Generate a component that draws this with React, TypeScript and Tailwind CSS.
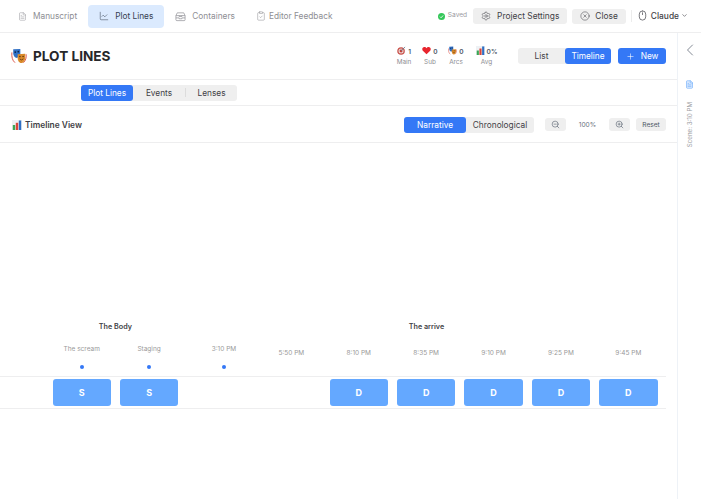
import { FileText, ChartLine, Settings, CircleX, ChevronDown, ChevronLeft, Plus, ZoomIn, ZoomOut, Mouse, ClipboardCheck } from "lucide-react";

const Masks = ({ s = 18 }: { s?: number }) => (
  <svg width={s} height={s} viewBox="0 0 18 18">
    <path d="M1 5 C0.5 10 1.5 14 4.5 16.5" stroke="#d9453a" strokeWidth="1" fill="none" />
    <path d="M17 7 C17.5 11 16.5 14 14 16.5" stroke="#d9453a" strokeWidth="1" fill="none" />
    <path d="M2.5 1.5 L10.5 1 L10.5 8 C10 10.5 7 11.5 5.5 11 C3.5 10.2 2.5 8 2.5 6z" fill="#2f6fc4" />
    <circle cx="4.8" cy="4.6" r="1" fill="#10264d" />
    <circle cx="8.2" cy="4.2" r="1" fill="#10264d" />
    <path d="M7.5 7 L16 6.5 L16 11 C16 14.5 13.4 17 11.5 17 C9 17 7.5 14 7.5 11z" fill="#d98a2b" />
    <circle cx="10" cy="9.7" r="0.9" fill="#5a3210" />
    <circle cx="13.6" cy="9.5" r="0.9" fill="#5a3210" />
    <path d="M9.8 12.3 Q11.8 14.6 14 12.2" stroke="#5a3210" strokeWidth="0.9" fill="none" />
  </svg>
);

const Bars = ({ s = 10 }: { s?: number }) => (
  <svg width={s} height={s} viewBox="0 0 10 10">
    <rect x="0" y="0" width="10" height="10" fill="#eef1f4" />
    <rect x="0.8" y="5" width="2.4" height="5" fill="#3aa655" />
    <rect x="3.8" y="2.8" width="2.4" height="7.2" fill="#d9453a" />
    <rect x="6.8" y="0.5" width="2.4" height="9.5" fill="#2f6fc4" />
  </svg>
);

const Target = () => (
  <svg width="9" height="9" viewBox="0 0 10 10">
    <circle cx="4.5" cy="5.5" r="4.2" fill="#c9504a" />
    <circle cx="4.5" cy="5.5" r="2.8" fill="#ead9d6" />
    <circle cx="4.5" cy="5.5" r="1.6" fill="#c9403a" />
    <path d="M4.5 5.5 L9 1" stroke="#5b7f95" strokeWidth="0.9" />
  </svg>
);

const Heart = () => (
  <svg width="9" height="9" viewBox="0 0 10 10">
    <path d="M5 9.3 L0.9 5.2 C-0.3 3.8 0.3 1.3 2.6 1.2 C3.7 1.2 4.5 1.8 5 2.6 C5.5 1.8 6.3 1.2 7.4 1.2 C9.7 1.3 10.3 3.8 9.1 5.2z" fill="#e8252e" />
  </svg>
);

const Box = () => (
  <svg width="11" height="11" viewBox="0 0 24 24" fill="none" stroke="currentColor" strokeWidth="1.5" strokeLinejoin="round">
    <path d="M5 4h14l3 6v9a2 2 0 0 1-2 2H4a2 2 0 0 1-2-2v-9z" />
    <path d="M2 10h20" />
    <path d="M2 15h7v2h6v-2h7" />
    <path d="M9 10v2h6v-2" />
  </svg>
);

function CircleCheck() {
  return (
    <svg width="7" height="7" viewBox="0 0 10 10" className="mr-[3px]">
      <circle cx="5" cy="5" r="5" fill="#34c759" />
      <path d="M2.8 5.2 L4.4 6.8 L7.3 3.5" stroke="#fff" strokeWidth="1.2" fill="none" />
    </svg>
  );
}

const Tab = ({ icon, label, active = false, extra = "gap-[6px]" }: { icon: React.ReactNode; label: string; active?: boolean; extra?: string }) => (
  <div className={`flex items-center h-[23px] rounded-[4px] text-[8.3px] ${extra} ${active ? "bg-[#dbeafe] text-[#374151]" : "text-[#8e8e93]"}`}>
    {icon}
    <span>{label}</span>
  </div>
);

const Stat = ({ icon, value, label, extra = "w-[26px]" }: { icon: React.ReactNode; value: string; label: string; extra?: string }) => (
  <div className={`flex flex-col items-center gap-[3px] ${extra}`}>
    <div className="flex items-center gap-[2px] h-[10px] text-[6.5px] font-semibold text-[#4b5563]">
      {icon}
      <span className="pt-[4px] leading-[10px]">{value}</span>
    </div>
    <div className="text-[6.4px] leading-[9px] text-[#8e8e93]">{label}</div>
  </div>
);

const SceneLabel = ({ label, dot = false }: { label: string; dot?: boolean }) => (
  <div className={`w-[67.4px] shrink-0 flex flex-col items-center text-[6.5px] leading-[10px] text-[#999999] ${dot ? "pt-[1px]" : "pt-[5px]"}`}>
    <span>{label}</span>
    {dot && <span className="mt-[11px] w-[4px] h-[4px] rounded-full bg-[#3478f6]" />}
  </div>
);

const Card = ({ letter }: { letter?: string }) => (
  <div className="w-[67.4px] shrink-0 flex justify-center">
    {letter && (
      <div className="w-[58.4px] h-[27px] rounded-[3px] bg-[#64a8ff] flex items-center justify-center text-[9px] font-bold text-white">
        {letter}
      </div>
    )}
  </div>
);

export default function App() {
  return (
    <div className="w-[701px] h-[499px] flex flex-col bg-white overflow-hidden font-['Inter',sans-serif]">
      <header className="h-[33px] shrink-0 border-b border-[#eeeeef] flex items-center pl-[18px] pr-[13px]">
        <div className="flex items-center">
          <Tab extra="gap-[6px] pr-[11px]" icon={<FileText size={9} strokeWidth={1.25} />} label="Manuscript" />
          <Tab extra="gap-[6px] px-[11px]" active icon={<ChartLine size={10} strokeWidth={1.25} />} label="Plot Lines" />
          <Tab extra="gap-[6px] px-[11px]" icon={<Box />} label="Containers" />
          <Tab extra="pl-[10px] gap-[3px]" icon={<ClipboardCheck size={10} strokeWidth={1.25} />} label="Editor Feedback" />
        </div>
        <div className="ml-auto flex items-center">
          <CircleCheck />
          <span className="text-[6.6px] text-[#9a9aa0] mr-[6px]">Saved</span>
          <div className="flex items-center gap-[6px] h-[16px] px-[8px] rounded-[3px] bg-[#efefef] text-[8.4px] text-[#3f3f46]">
            <Settings size={10} strokeWidth={1.25} />
            <span>Project Settings</span>
          </div>
          <div className="ml-[5px] flex items-center gap-[5px] h-[15px] px-[8px] rounded-[3px] bg-[#efefef] text-[8.4px] text-[#3f3f46]">
            <CircleX size={10} strokeWidth={1.25} />
            <span>Close</span>
          </div>
          <div className="ml-[5px] w-px h-[12px] bg-[#ececec]" />
          <div className="ml-[5px] flex items-center text-[8.4px] font-medium text-[#3f3f46]">
            <Mouse size={11} strokeWidth={1.5} className="mr-[3px]" />
            <span className="mr-[2px]">Claude</span>
            <ChevronDown size={7} strokeWidth={2} />
          </div>
        </div>
      </header>

      <div className="flex-1 flex min-h-0">
        <main className="w-[677px] shrink-0 flex flex-col">
          <div className="h-[47px] shrink-0 border-b border-[#eeeeef] flex items-center pl-[11px] pr-[11px]">
            <Masks s={16} />
            <h1 className="ml-[6px] text-[13.6px] font-bold text-[#27272a] pt-[1px]">PLOT LINES</h1>
            <div className="ml-auto flex items-start mr-[21px]">
              <Stat icon={<Target />} value="1" label="Main" />
              <Stat icon={<Heart />} value="0" label="Sub" />
              <Stat icon={<Masks s={9} />} value="0" label="Arcs" />
              <Stat extra="w-[21px] ml-[7px]" icon={<Bars s={9} />} value="0%" label="Avg" />
            </div>
            <div className="flex items-center h-[16px] rounded-[3px] bg-[#efefef] text-[8.3px]">
              <div className="w-[47px] text-center text-[#3f3f46]">List</div>
              <div className="w-[46px] h-full rounded-[3px] bg-[#3478f6] text-white flex items-center justify-center">Timeline</div>
            </div>
            <div className="ml-[7px] flex items-center justify-center gap-[6px] w-[48px] h-[16px] rounded-[3px] bg-[#3478f6] text-[8.3px] text-white">
              <Plus size={9} strokeWidth={1.5} />
              <span>New</span>
            </div>
          </div>

          <div className="h-[26px] shrink-0 border-b border-[#eeeeef] flex items-center pl-[81px]">
            <div className="flex items-center h-[16px] rounded-[3px] bg-[#efefef] text-[8.3px] text-[#3f3f46]">
              <div className="w-[52px] h-full pt-[2px] rounded-[3px] bg-[#3478f6] text-white flex items-center justify-center">Plot Lines</div>
              <div className="w-[52px] pt-[2px] text-center">Events</div>
              <div className="w-px h-[9px] bg-[#dcdcdc]" />
              <div className="w-[51px] pt-[2px] text-center">Lenses</div>
            </div>
          </div>

          <div className="h-[37px] shrink-0 border-b border-[#eeeeef] flex items-center pt-[1px] pl-[12px] pr-[11px]">
            <Bars />
            <span className="ml-[3px] text-[8.4px] font-semibold text-[#3f3f46] pt-[2px]">Timeline View</span>
            <div className="ml-auto flex items-center h-[16px] rounded-[3px] bg-[#efefef] text-[8.3px] text-[#3f3f46]">
              <div className="w-[62px] h-full pt-[2px] rounded-[3px] bg-[#3478f6] text-white flex items-center justify-center">Narrative</div>
              <div className="w-[68px] pt-[2px] text-center">Chronological</div>
            </div>
            <div className="ml-[11px] w-[21px] h-[13px] rounded-[3px] bg-[#efefef] flex items-center justify-center text-[#4b5563]">
              <ZoomOut size={9} strokeWidth={1.5} />
            </div>
            <span className="w-[43px] pt-[3px] text-center text-[6.6px] text-[#6b7280]">100%</span>
            <div className="w-[21px] h-[13px] rounded-[3px] bg-[#efefef] flex items-center justify-center text-[#4b5563]">
              <ZoomIn size={9} strokeWidth={1.5} />
            </div>
            <div className="ml-[6px] w-[30px] h-[13px] pt-[2px] rounded-[3px] bg-[#efefef] flex items-center justify-center text-[6.6px] text-[#4b5563]">Reset</div>
          </div>

          <div className="flex-1" />

          <div className="shrink-0 w-[666px] pb-[90px]">
            <div className="flex pl-[48px] h-[10px] items-center text-[7.2px] font-semibold text-[#3f3f46]">
              <div className="w-[134.8px] text-center">The Body</div>
              <div className="w-[142.6px]" />
              <div className="w-[202.2px] text-center">The arrive</div>
            </div>
            <div className="flex pl-[48px] mt-[11px] h-[33px]">
              <SceneLabel dot label="The scream" />
              <SceneLabel dot label="Staging" />
              <div className="w-[7.5px] shrink-0" />
              <SceneLabel dot label="3:10 PM" />
              <SceneLabel label="5:50 PM" />
              <SceneLabel label="8:10 PM" />
              <SceneLabel label="8:35 PM" />
              <SceneLabel label="9:10 PM" />
              <SceneLabel label="9:25 PM" />
              <SceneLabel label="9:45 PM" />
            </div>
            <div className="flex pl-[48px] h-[33px] items-center border-y border-[#eeeeef]">
              <Card letter="S" />
              <Card letter="S" />
              <div className="w-[7.5px] shrink-0" />
              <Card />
              <Card />
              <Card letter="D" />
              <Card letter="D" />
              <Card letter="D" />
              <Card letter="D" />
              <Card letter="D" />
            </div>
          </div>
        </main>

        <aside className="w-[24px] shrink-0 border-l border-[#eef2f7] flex flex-col items-center pt-[7px]">
          <ChevronLeft size={20} strokeWidth={1} className="text-[#6b7280]" />
          <FileText size={9} strokeWidth={1.5} className="mt-[20px] text-[#60a5fa] fill-[#dbeafe]" />
          <div className="mt-[13px] text-[6.2px] leading-[9px] text-[#9a9aa0] whitespace-nowrap [writing-mode:vertical-rl] rotate-180">Scene: 3:10 PM</div>
        </aside>
      </div>
    </div>
  );
}
